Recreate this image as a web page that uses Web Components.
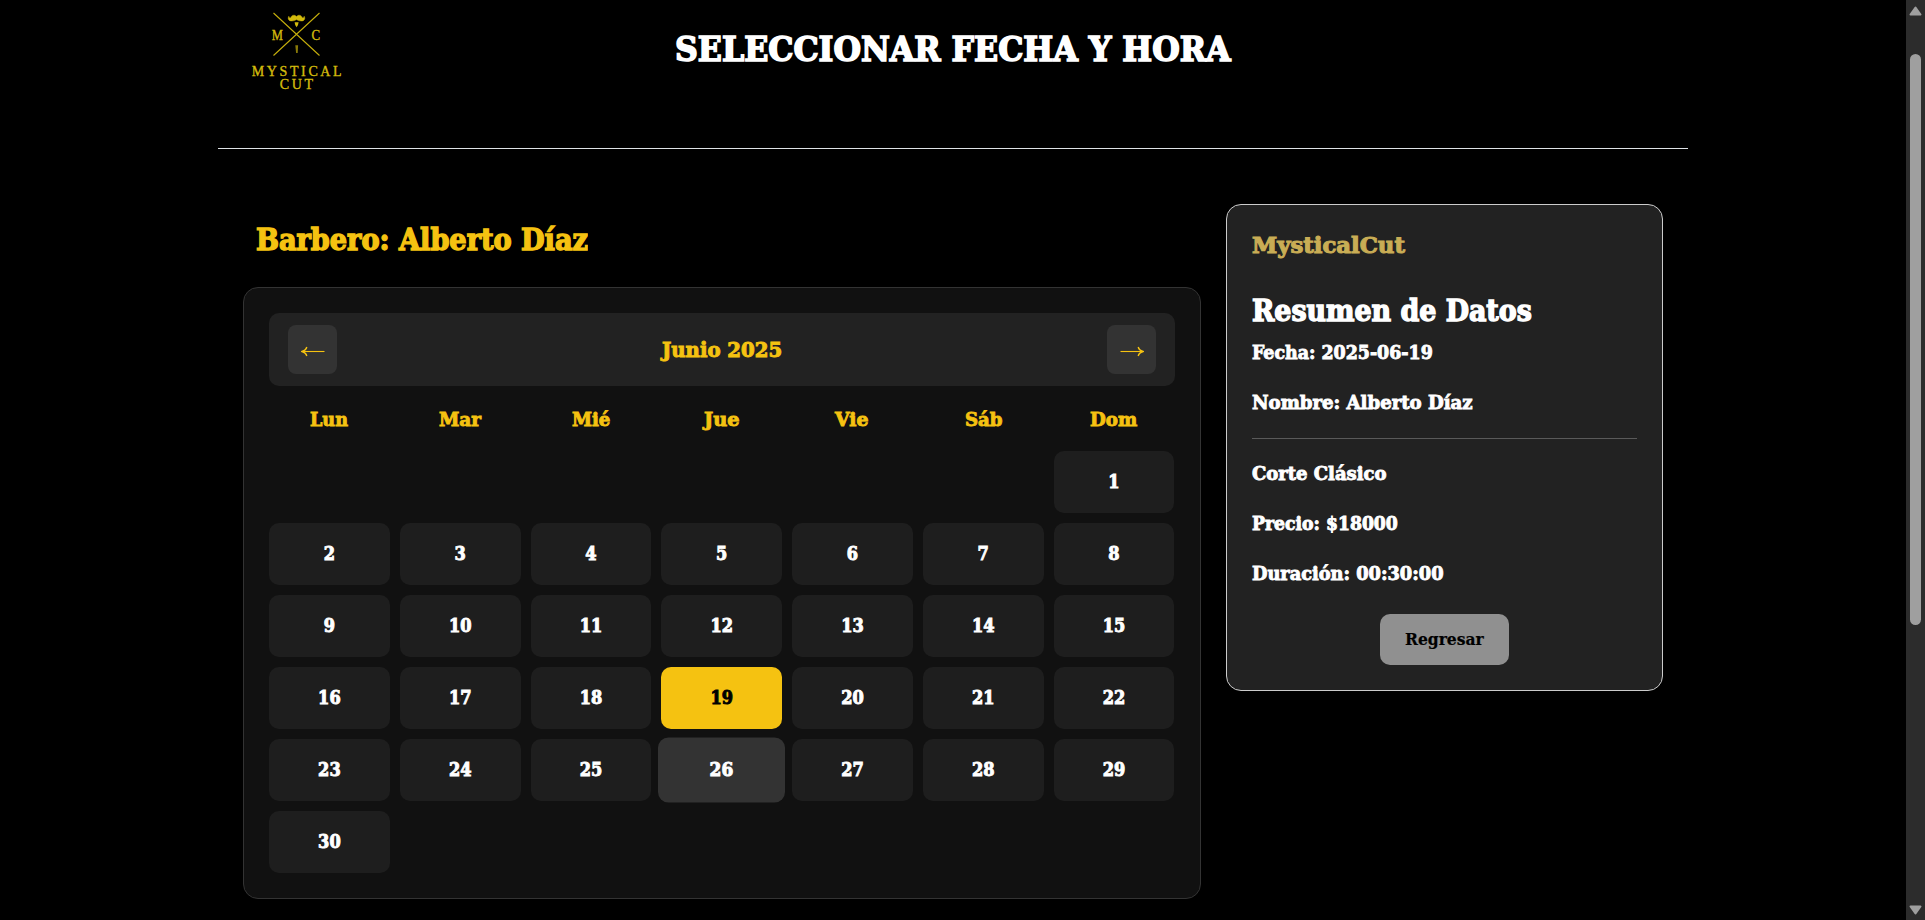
<!DOCTYPE html>
<html lang="es">
<head>
<meta charset="utf-8">
<title>Mystical Cut</title>
<style>
html,body{margin:0;height:100%;background:#000;overflow:hidden}
body{font-family:"DejaVu Serif Condensed","DejaVu Serif",serif;font-stretch:condensed;font-weight:bold;color:#fff}
</style>
</head>
<body>
<booking-app></booking-app>
<script>
const define = (name, html, setup) => customElements.define(name, class extends HTMLElement {
  connectedCallback() {
    if (this.shadowRoot) return;
    const t = document.createElement('template');
    t.innerHTML = html;
    this.attachShadow({mode: 'open'}).append(t.content.cloneNode(true));
    if (setup) setup.call(this, this.shadowRoot);
  }
});

/* Heading text condensed or widened to a given measure. */
define('fit-text', `<style>
:host{display:block;white-space:nowrap;-webkit-text-stroke:.045em currentColor}
span{display:inline-block;transform-origin:0 50%}
</style><span><slot></slot></span>`, function (root) {
  const w = +this.getAttribute('width');
  const s = root.querySelector('span');
  this.style.width = w + 'px';
  s.style.transform = `scaleX(${w / s.offsetWidth})`;
});

define('brand-logo', `<style>:host{display:block}svg{display:block}
text{font-family:"Liberation Serif",serif;font-weight:normal;font-stretch:normal}</style>
<svg width="100" height="100" viewBox="246 0 100 100" fill="#d3bb0c">
<path d="M273.5 13 319.5 55.5M319.5 13 273.5 55.5" stroke="#c5ae0c" stroke-width="1.1"/>
<path d="M296.5 16.6C294.8 14.4 291.6 14.9 291 17.2 290.5 18.3 289 18 288.9 16.2 287.2 18.6 288.8 21.2 291.8 21 294 20.9 295.4 20.3 296.5 19.6 297.6 20.3 299 20.9 301.2 21 304.2 21.2 305.8 18.6 304.1 16.2 304 18 302.5 18.3 302 17.2 301.4 14.9 298.2 14.4 296.5 16.6z" stroke="#d3bb0c" stroke-width=".4"/>
<path d="M294.6 22.2h4l-.6 2.8-1.4 2.2-1.4-2.2z"/>
<path d="M295.3 45.3h2.8l-.4 7.6h-1.6z" opacity=".65"/>
<g stroke="#d3bb0c" stroke-width=".35">
<text x="271.8" y="40" font-size="14" textLength="11.2" lengthAdjust="spacingAndGlyphs">M</text>
<text x="311.6" y="40" font-size="14" textLength="8.6" lengthAdjust="spacingAndGlyphs">C</text>
<text x="251.8" y="75.5" font-size="14" textLength="93">MYSTICAL</text>
<text x="279.8" y="88.8" font-size="14" textLength="36">CUT</text></g>
</svg>`, function (root) {
  /* textLength counts the gap after the last letter, so trim it to the drawn measure. */
  const [, , name, sub] = root.querySelectorAll('text');
  for (const [el, w] of [[name, 89.8], [sub, 33.2]]) {
    el.removeAttribute('textLength');
    const n = el.textContent.length - 1;
    el.setAttribute('letter-spacing', (w - el.getComputedTextLength()) / n);
  }
});

define('page-header', `<style>
:host{display:grid;grid-template-columns:1fr auto 1fr;align-items:start;height:148px;border-bottom:1px solid #dee2e6}
brand-logo{margin-left:28px}
fit-text{margin-top:29px;font-size:34px;line-height:40px}
</style><brand-logo></brand-logo><fit-text width="556"><slot></slot></fit-text><span></span>`);

define('month-button', `<style>
:host{display:flex;align-items:center;justify-content:center;width:49px;height:49px;border-radius:8px;background:#333}
:host([next]) svg{transform:scaleX(-1)}
svg{margin-top:4px}
</style><svg width="24" height="11" viewBox="0 0 24 11" fill="none" stroke="#f5c211"><path d="M1.5 5.5H23.5" stroke-width="1.1"/><path d="M5.8 1Q5 4.3 1 5.5Q5 6.7 5.8 10" stroke-width="1.4"/></svg>`);

define('month-bar', `<style>
:host{display:flex;align-items:center;justify-content:space-between;box-sizing:border-box;height:73px;padding:0 19px;border-radius:10px;background:#222;color:#f5c211}
fit-text{font-size:20.6px;line-height:30px}
</style><month-button></month-button><fit-text width="120"><slot></slot></fit-text><month-button next></month-button>`);

define('day-cell', `<style>
:host{display:flex;align-items:center;justify-content:center;height:62px;border-radius:10px;background:#1e1e1e;font-size:18px;line-height:24px;-webkit-text-stroke:.9px currentColor}
:host([selected]){background:#f5c211;color:#000}
:host([hovered]){background:#333;transform:scale(1.05)}
</style><span><slot></slot></span>`);

define('month-calendar', `<style>
:host{display:block;border:1px solid #333;border-radius:15px;background:#111;padding:25px}
.week,.days{display:grid;grid-template-columns:repeat(7,1fr);column-gap:10px;row-gap:10px;width:905.4px}
.week{margin:19px 0 16px;justify-items:center;color:#f5c211;font-size:18.5px;line-height:30px}
day-cell:first-child{grid-column:7}
</style><month-bar>Junio 2025</month-bar><div class="week"></div><div class="days"></div>`, function (root) {
  root.querySelector('.week').innerHTML =
    [['Lun',38],['Mar',42],['Mié',38],['Jue',36],['Vie',34],['Sáb',37],['Dom',47]]
      .map(([d, w]) => `<fit-text width="${w}">${d}</fit-text>`).join('');
  root.querySelector('.days').innerHTML = Array.from({length: 30}, (_, i) =>
    `<day-cell${i === 18 ? ' selected' : i === 25 ? ' hovered' : ''}>${i + 1}</day-cell>`).join('');
});

define('booking-summary', `<style>
:host{display:block;box-sizing:border-box;width:437px;height:487px;border:1px solid #ccc;border-radius:15px;background:#222;padding:25px;font-size:18.5px;line-height:24px}
.brand{color:#c9ad55;font-size:23px;line-height:30px}
.title{margin:31px 0 10px;font-size:29px;line-height:40px}
.row + .row{margin-top:26px}
hr{margin:23px 0 23px;border:0;height:1px;background:#5a5a5a}
button{display:flex;align-items:center;justify-content:center;margin:28px auto 0;width:129px;height:51px;padding:0 0 2px;border:0;border-radius:10px;background:#909090;color:#000;font:inherit;font-size:17.5px}
button fit-text{-webkit-text-stroke:.2px}
</style>
<fit-text class="brand" width="153">MysticalCut</fit-text>
<fit-text class="title" width="280">Resumen de Datos</fit-text>
<fit-text class="row" width="181">Fecha: 2025-06-19</fit-text>
<fit-text class="row" width="221">Nombre: Alberto Díaz</fit-text>
<hr>
<fit-text class="row" width="134">Corte Clásico</fit-text>
<fit-text class="row" width="146">Precio: $18000</fit-text>
<fit-text class="row" width="191">Duración: 00:30:00</fit-text>
<button><fit-text width="79">Regresar</fit-text></button>`);

define('scroll-rail', `<style>
:host{display:flex;flex-direction:column;align-items:center;box-sizing:border-box;width:19px;height:920px;background:#2c2c2c;padding:6px 0 5px}
i{width:11px;height:571px;margin:38px 0 auto;border-radius:6px;background:#9f9f9f}
svg{display:block;fill:#9f9f9f;stroke:#9f9f9f;stroke-width:2;stroke-linejoin:round}
</style><svg width="13" height="10"><path d="M6.5 1.5 11.5 8.5H1.5z"/></svg><i></i>
<svg width="13" height="10"><path d="M6.5 8.5 11.5 1.5H1.5z"/></svg>`);

define('booking-app', `<style>
:host{display:flex;height:920px}
.page{flex:1;display:flex;flex-direction:column;align-items:center;overflow:hidden}
page-header{width:1470px;flex:none}
main{display:flex;align-items:flex-start;gap:25px;width:1420px;padding-top:55px}
section{width:958px}
.barber{margin:16px 0 27px 13px;color:#f5c211;font-size:29px;line-height:40px}
</style>
<div class="page"><page-header>SELECCIONAR FECHA Y HORA</page-header>
<main><section><fit-text class="barber" width="332">Barbero: Alberto Díaz</fit-text><month-calendar></month-calendar></section>
<booking-summary></booking-summary></main></div>
<scroll-rail></scroll-rail>`);
</script>
</body>
</html>
